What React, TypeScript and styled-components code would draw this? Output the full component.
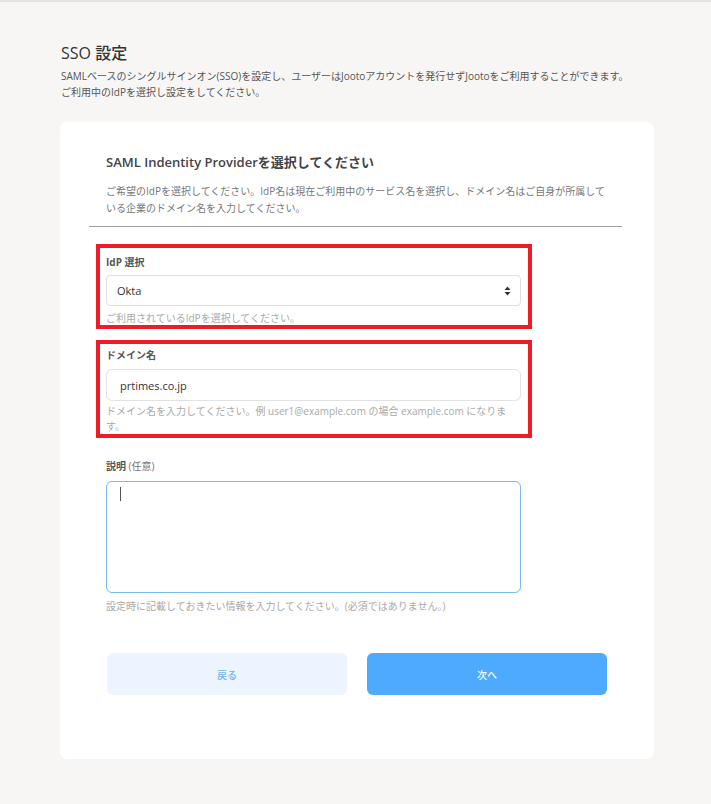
import React from "react";
import styled, { createGlobalStyle } from "styled-components";

const Global = createGlobalStyle`
  html, body { margin: 0; padding: 0; }
  body {
    background: #f7f6f5;
    font-family: "Open Sans", "Noto Sans CJK JP", sans-serif;
    color: #333;
  }
  * { box-sizing: border-box; }
`;

const Page = styled.div`
  min-height: 804px;
  border-top: 2px solid #e3e3e3;
  padding: 40px 57px 40px 61px;
`;

const Title = styled.h1`
  margin: 0;
  font-size: 16px;
  line-height: 22px;
  font-weight: 500;
  color: #333;
`;

const Lead = styled.p`
  margin: 4px 0 0;
  font-size: 10px;
  line-height: 16px;
  color: #555;
`;

const Card = styled.section`
  margin: 22px 0 0 -1px;
  width: 594px;
  background: #fff;
  border-radius: 7px;
  padding: 31px 32px 64px 29px;
`;

const CardHead = styled.div`
  padding-left: 17px;
`;

const CardTitle = styled.h2`
  margin: 0;
  font-size: 13px;
  line-height: 18px;
  font-weight: 600;
  color: #444;
`;

const CardLead = styled.p`
  margin: 12px 0 0;
  font-size: 10px;
  line-height: 17px;
  color: #777;
  padding-right: 10px;
`;

const Divider = styled.hr`
  margin: 9px 0 0;
  border: none;
  border-top: 1px solid #9f9f9f;
`;

const Form = styled.div`
  padding-left: 7px;
  display: flex;
  flex-direction: column;
`;

const Highlight = styled.div<{ $top: number; $pt: number }>`
  margin-top: ${(p) => p.$top}px;
  width: 436px;
  border: 4px solid #ee1c25;
  padding: ${(p) => p.$pt}px 7px 0 6px;
`;

const Plain = styled.div`
  margin-top: 21px;
  padding-left: 10px;
  width: 425px;
`;

const Label = styled.div<{ $mb: number }>`
  font-size: 10px;
  line-height: 14px;
  font-weight: 700;
  color: #555;
  margin-bottom: ${(p) => p.$mb}px;
`;

const Optional = styled.span`
  font-weight: 400;
  color: #777;
`;

const SelectBox = styled.div`
  position: relative;
  height: 31px;
  border: 1px solid #dcdfe4;
  border-radius: 4px;
  display: flex;
  align-items: center;
  padding-left: 10px;
  font-size: 11px;
  color: #333;
`;

const Arrows = styled.svg`
  position: absolute;
  right: 9px;
  top: 50%;
  transform: translateY(-50%);
`;

const TextInput = styled.div`
  height: 32px;
  border: 1px solid #e0e2e6;
  border-radius: 6px;
  display: flex;
  align-items: center;
  padding-left: 13px;
  font-size: 11px;
  color: #333;
`;

const Help = styled.div<{ $mt: number; $lh: number }>`
  margin-top: ${(p) => p.$mt}px;
  font-size: 10px;
  line-height: ${(p) => p.$lh}px;
  color: #a9a9a9;
`;

const AreaWrap = styled.div`
  position: relative;
`;

const Area = styled.textarea`
  display: block;
  width: 415px;
  height: 112px;
  border: 1px solid #7ab8f6;
  border-radius: 6px;
  resize: none;
  outline: none;
  font: inherit;
  padding: 6px 14px;
`;

const Caret = styled.span`
  position: absolute;
  left: 14px;
  top: 6px;
  width: 1px;
  height: 14px;
  background: #555;
`;

const Buttons = styled.div`
  margin-top: 40px;
  padding-left: 18px;
  display: flex;
  gap: 20px;
`;

const Button = styled.button<{ $primary?: boolean }>`
  width: 240px;
  height: 42px;
  border: none;
  border-radius: 6px;
  font-family: inherit;
  font-size: 10px;
  font-weight: 500;
  cursor: pointer;
  background: ${(p) => (p.$primary ? "#4eaaff" : "#ecf5ff")};
  color: ${(p) => (p.$primary ? "#ffffff" : "#73b1f3")};
`;

export default function App() {
  return (
    <>
      <Global />
      <Page>
        <Title>SSO 設定</Title>
        <Lead>
          SAMLベースのシングルサインオン(SSO)を設定し、ユーザーはJootoアカウントを発行せずJootoをご利用することができます。
          <br />
          ご利用中のIdPを選択し設定をしてください。
        </Lead>
        <Card>
          <CardHead>
            <CardTitle>SAML Indentity Providerを選択してください</CardTitle>
            <CardLead>
              ご希望のIdPを選択してください。IdP名は現在ご利用中のサービス名を選択し、ドメイン名はご自身が所属している企業のドメイン名を入力してください。
            </CardLead>
          </CardHead>
          <Divider />
          <Form>
            <Highlight $top={17} $pt={7}>
              <Label $mb={6}>IdP 選択</Label>
              <SelectBox>
                Okta
                <Arrows width="7" height="10" viewBox="0 0 7 10">
                  <path d="M3.5 0.5 L6.5 4 H0.5 Z" fill="#333" />
                  <path d="M3.5 9.5 L6.5 6 H0.5 Z" fill="#333" />
                </Arrows>
              </SelectBox>
              <Help $mt={5} $lh={14}>ご利用されているIdPを選択してください。</Help>
            </Highlight>
            <Highlight $top={11} $pt={4}>
              <Label $mb={7}>ドメイン名</Label>
              <TextInput>prtimes.co.jp</TextInput>
              <Help $mt={3} $lh={15}>
                ドメイン名を入力してください。例 user1@example.com の場合 example.com になります。
              </Help>
            </Highlight>
            <Plain>
              <Label $mb={8}>
                説明 <Optional>(任意)</Optional>
              </Label>
              <AreaWrap>
                <Area />
                <Caret />
              </AreaWrap>
              <Help $mt={6} $lh={14}>
                設定時に記載しておきたい情報を入力してください。(必須ではありません。)
              </Help>
            </Plain>
          </Form>
          <Buttons>
            <Button>戻る</Button>
            <Button $primary>次へ</Button>
          </Buttons>
        </Card>
      </Page>
    </>
  );
}
